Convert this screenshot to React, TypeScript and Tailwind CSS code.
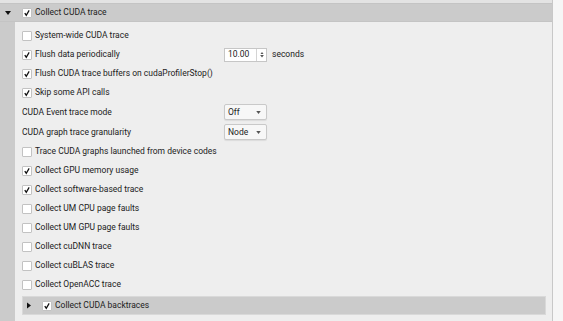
import type { ReactNode } from "react";

function CheckBox({ checked = false }: { checked?: boolean }) {
  return (
    <span className="flex h-[10px] w-[10px] shrink-0 items-center justify-center rounded-[1px] border border-[#c2c2c2] bg-white">
      {checked ? (
        <svg viewBox="0 0 10 10" className="h-[10px] w-[10px]">
          <path d="M2.2 5.1 L4.1 7.8 L7.7 1.8" fill="none" stroke="#111" strokeWidth="1.6" />
        </svg>
      ) : null}
    </span>
  );
}

function CheckRow({ label, checked }: { label: string; checked?: boolean }) {
  return (
    <div className="flex h-[19px] items-center gap-[3px]">
      <CheckBox checked={checked} />
      <span>{label}</span>
    </div>
  );
}

function FieldRow({ label, children }: { label: string; children: ReactNode }) {
  return (
    <div className="flex h-[20px] items-center">
      <div className="flex w-[202px] items-center">
        <span>{label}</span>
      </div>
      {children}
    </div>
  );
}

function Select({ value }: { value: string }) {
  return (
    <div className="flex h-[16px] w-[43px] items-center justify-between rounded-[2px] border border-[#c9c9c9] bg-[#f7f7f7] pl-[3px] pr-[5px] shadow-[0_1px_1px_rgba(0,0,0,0.08)]">
      <span>{value}</span>
      <svg viewBox="0 0 6 4" className="h-[3px] w-[5px]">
        <path d="M0 0 L6 0 L3 4 Z" fill="#555" />
      </svg>
    </div>
  );
}

export default function App() {
  return (
    <div
      className="flex h-[321px] w-[563px] overflow-hidden bg-[#eeeeee] text-[8.5px] leading-none text-[#222]"
      style={{ fontFamily: "Roboto, 'Liberation Sans', sans-serif" }}
    >
      <div className="flex w-[552px] flex-col">
        <div className="h-[3px] bg-[#e3e3e3]" />
        <div className="flex h-[19px] items-center border-y border-[#c4c4c4] bg-[#cbcbcb]">
          <svg viewBox="0 0 6 4" className="ml-[5px] h-[4px] w-[6px]">
            <path d="M0 0 L6 0 L3 4 Z" fill="#111" />
          </svg>
          <div className="ml-[11px] flex items-center gap-[3px]">
            <CheckBox checked />
            <span>Collect CUDA trace</span>
          </div>
        </div>
        <div className="flex flex-1">
          <div className="w-[15px] bg-[#cbcbcb]" />
          <div className="flex flex-1 flex-col pl-[7px] pr-[6px] pt-[4px]">
            <CheckRow label="System-wide CUDA trace" />
            <div className="flex h-[19px] items-center">
              <div className="flex w-[202px] items-center gap-[3px]">
                <CheckBox checked />
                <span>Flush data periodically</span>
              </div>
              <div className="flex h-[14px] w-[43px] items-center border border-[#c6c6c6] bg-white pl-[3px]">
                <span className="flex-1">10.00</span>
                <div className="flex h-full w-[10px] flex-col items-center justify-center gap-[1px] border-l border-[#d4d4d4]">
                  <svg viewBox="0 0 6 4" className="h-[2.5px] w-[4px]">
                    <path d="M0 4 L6 4 L3 0 Z" fill="#555" />
                  </svg>
                  <svg viewBox="0 0 6 4" className="h-[2.5px] w-[4px]">
                    <path d="M0 0 L6 0 L3 4 Z" fill="#555" />
                  </svg>
                </div>
              </div>
              <span className="ml-[5px]">seconds</span>
            </div>
            <CheckRow label="Flush CUDA trace buffers on cudaProfilerStop()" checked />
            <CheckRow label="Skip some API calls" checked />
            <FieldRow label="CUDA Event trace mode">
              <Select value="Off" />
            </FieldRow>
            <FieldRow label="CUDA graph trace granularity">
              <Select value="Node" />
            </FieldRow>
            <CheckRow label="Trace CUDA graphs launched from device codes" />
            <CheckRow label="Collect GPU memory usage" checked />
            <CheckRow label="Collect software-based trace" checked />
            <CheckRow label="Collect UM CPU page faults" />
            <CheckRow label="Collect UM GPU page faults" />
            <CheckRow label="Collect cuDNN trace" />
            <CheckRow label="Collect cuBLAS trace" />
            <CheckRow label="Collect OpenACC trace" />
            <div className="mt-[2px] flex h-[19px] items-center border border-[#d9d9d9] bg-[#cbcbcb]">
              <svg viewBox="0 0 4 6" className="ml-[4px] h-[7px] w-[4px]">
                <path d="M0 0 L4 3 L0 6 Z" fill="#111" />
              </svg>
              <div className="ml-[11px] flex items-center gap-[3px]">
                <CheckBox checked />
                <span>Collect CUDA backtraces</span>
              </div>
            </div>
          </div>
        </div>
      </div>
      <div className="w-[11px] border-l border-[#c8c8c8] bg-[#f6f6f6]" />
    </div>
  );
}
